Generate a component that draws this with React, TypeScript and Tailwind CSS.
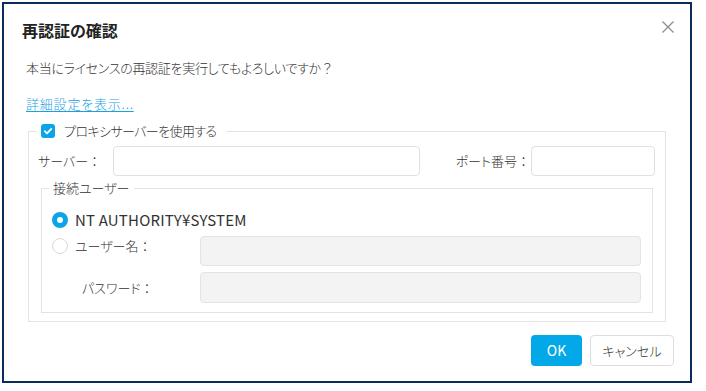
import React from "react";

const jp = "font-['Noto_Sans_CJK_JP','Noto_Sans',sans-serif]";

function Check() {
  return (
    <span className="flex h-[14px] w-[14px] items-center justify-center rounded-[3px] bg-[#0aa5e6]">
      <svg width="10" height="10" viewBox="0 0 10 10" fill="none">
        <path d="M1.8 5.2 L4 7.3 L8.3 2.8" stroke="#fff" strokeWidth="1.8" strokeLinecap="round" strokeLinejoin="round" />
      </svg>
    </span>
  );
}

function Colon() {
  return <span className="[font-feature-settings:normal]">：</span>;
}

export default function App() {
  return (
    <div className={`h-[391px] w-[706px] bg-white pl-[2px] pt-[2px] text-[#333] ${jp} [font-feature-settings:'palt']`}>
      <div className="flex h-[381px] w-[690px] flex-col border-2 border-[#0b2a5e] bg-white">
        <div className="flex items-center justify-between pl-[18px] pr-[16px] pt-[14px]">
          <span className="text-[16px] font-bold leading-[24px] text-[#222]">再認証の確認</span>
          <svg width="12" height="12" viewBox="0 0 12 12" className="mt-[-6px]">
            <path d="M0.5 0.5 L11.5 11.5 M11.5 0.5 L0.5 11.5" stroke="#8a8a8a" strokeWidth="1.2" />
          </svg>
        </div>
        <div className="mt-[16px] pl-[22px] text-[13px] font-light leading-[20px] tracking-[-0.3px]">本当にライセンスの再認証を実行してもよろしいですか<span className="[font-feature-settings:normal]">？</span></div>
        <div className="mt-[16px] pl-[22px] text-[13px] font-light leading-[20px] tracking-[0.8px]">
          <span className="text-[#1ba1e2] underline underline-offset-2">詳細設定を表示...</span>
        </div>

        <fieldset className="ml-[24px] mt-[7px] w-[638px] border border-[#e3e3e3] pb-[8px] pl-[9px] pr-[10px] font-light">
          <legend className="ml-[-2px] px-[5px]">
            <span className="flex items-center gap-[9px] pr-[4px] text-[13px] leading-[20px] tracking-[-0.6px]">
              <Check />
              プロキシサーバーを使用する
            </span>
          </legend>
          <div className="mt-[5px] flex items-center">
            <span className="w-[75px] text-[13px] leading-[20px]">サーバー<Colon /></span>
            <div className="h-[30px] w-[307px] rounded-[4px] border border-[#e1e1e1] bg-white" />
            <span className="flex-1 text-right text-[13px] leading-[20px]">ポート番号<Colon /></span>
            <div className="ml-[1px] h-[30px] w-[124px] rounded-[4px] border border-[#e1e1e1] bg-white" />
          </div>

          <fieldset className="ml-[3px] mt-[2px] w-[612px] border border-[#e3e3e3] pb-[9px] pl-[10px] pr-[10px]">
            <legend className="ml-[-3px] px-[4px] text-[13px] leading-[20px]">接続ユーザー</legend>
            <div className="mt-[12px] flex h-[20px] items-center">
              <span className="flex h-[16px] w-[16px] items-center justify-center rounded-full bg-[#0aa5e6]">
                <span className="h-[6px] w-[6px] rounded-full bg-white" />
              </span>
              <span className="ml-[7px] text-[15px] font-normal leading-[20px] tracking-[0.2px]">NT AUTHORITY¥SYSTEM</span>
            </div>
            <div className="mt-[6px] flex items-start">
              <div className="flex h-[20px] w-[148px] items-center">
                <span className="h-[16px] w-[16px] rounded-full border border-[#d9d9d9] bg-white" />
                <span className="ml-[7px] text-[13px] leading-[20px]">ユーザー名<Colon /></span>
              </div>
              <div className="h-[30px] w-[441px] rounded-[4px] border border-[#e3e3e3] bg-[#f3f3f3]" />
            </div>
            <div className="mt-[6px] flex items-center">
              <span className="w-[148px] pl-[30px] text-[13px] leading-[20px]">パスワード<Colon /></span>
              <div className="h-[31px] w-[441px] rounded-[4px] border border-[#e3e3e3] bg-[#f3f3f3]" />
            </div>
          </fieldset>
        </fieldset>

        <div className="mt-[13px] flex justify-end gap-[8px] pr-[16px]">
          <button className="flex h-[31px] w-[51px] items-center justify-center rounded-[4px] bg-[#03a8e8] text-[14px] text-white">OK</button>
          <button className="flex h-[31px] w-[84px] items-center justify-center rounded-[4px] border border-[#dedede] bg-white text-[13px] font-light text-[#333]">キャンセル</button>
        </div>
      </div>
    </div>
  );
}
